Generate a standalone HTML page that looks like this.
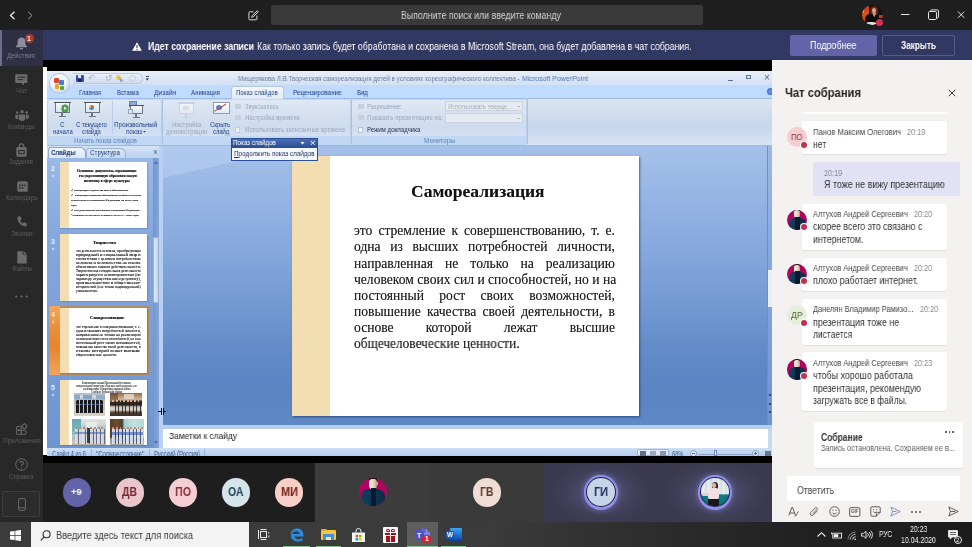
<!DOCTYPE html>
<html lang="ru">
<head>
<meta charset="utf-8">
<title>Microsoft Teams</title>
<style>
*{box-sizing:border-box;margin:0;padding:0}
html,body{width:972px;height:547px;overflow:hidden;background:#000}
body{font-family:"Liberation Sans",sans-serif;position:relative;color:#fff}
.a{position:absolute}
.t{position:absolute;white-space:nowrap;line-height:1;will-change:transform}
svg{position:absolute;overflow:visible}
/* ---------- title bar ---------- */
#titlebar{left:0;top:0;width:972px;height:30px;background:#1f1f1f}
#search{left:271px;top:5px;width:432px;height:20px;background:#3a3a3a;border-radius:2px}
/* ---------- rail ---------- */
#rail{left:0;top:30px;width:43px;height:492px;background:#282828}
#rail .act{left:0;top:0;width:43px;height:35.500px;background:#2f3046}
#rail .act:before{content:"";position:absolute;left:0;top:0;width:2px;height:36px;background:#6d6e8e}
.rl{position:absolute;left:0;width:43px;text-align:center;font-size:7.5px;color:#5c5c5c;line-height:1}
/* ---------- banner ---------- */
#banner{left:43px;top:30px;width:929px;height:30px;background:#313862}
/* ---------- stage ---------- */
#stage{left:0;top:0;width:772px;height:463px;background:#000;overflow:hidden;z-index:0}
#ppt{left:0;top:0;width:772px;height:455.500px;overflow:hidden}
#titlebar,#rail,#banner,#chat,#strip,#taskbar{z-index:2}
/* ---------- chat ---------- */
#chat{left:772px;top:60px;width:200px;height:462px;overflow:hidden;background:#f3f2f1;color:#252423}
/* ---------- strip ---------- */
#strip{left:43px;top:462.500px;width:729px;height:59.500px;background:#1e1e1e;overflow:hidden}
/* ---------- taskbar ---------- */
#taskbar{left:0;top:521.700px;width:972px;height:25.300px;background:linear-gradient(90deg,#3b3b3b 0%,#3b3b3b 50%,#2c2c2c 68%,#202020 84%,#1c1c1c 100%);overflow:hidden}
</style>
</head>
<body>
<div id="titlebar" class="a">
<svg style="left:8px;top:10px" width="32" height="11" viewBox="0 0 32 11" fill="none" stroke-linecap="square"><path d="M6 2.200 L2.500 5.500 L6 8.800" stroke="#e8e8e8" stroke-width="1.300"/><path d="M20.500 2.200 L24 5.500 L20.500 8.800" stroke="#9a9a9a" stroke-width="1"/></svg>
<svg style="left:248px;top:10px" width="11" height="11" viewBox="0 0 11 11" fill="none" stroke="#d6d6d6" stroke-width="1"><path d="M5.5 1.8H1.9a1 1 0 0 0-1 1v6a1 1 0 0 0 1 1h6a1 1 0 0 0 1-1V5.5"/><path d="M9.2 .7l1.1 1.1-5 5-1.6.5.5-1.6z"/></svg>
<div id="search" class="a"></div>
<div class="t" id="srchtxt" style="transform:scaleX(0.8547);transform-origin:0 0;left:401px;top:10.900px;font-size:10.3px;color:#d2d2d2">Выполните поиск или введите команду</div>
<div class="a" style="left:861.800px;top:4.800px;width:21.300px;height:20.600px;border-radius:50%;overflow:hidden;background:#17110f">
 <div class="a" style="left:0;top:1.500px;width:7.200px;height:16px;background:linear-gradient(#c33d1a,#e0501f 50%,#d2431b)"></div>
 <div class="a" style="left:.6px;top:5px;width:1.800px;height:3.500px;background:#d9a13a"></div>
 <div class="a" style="left:17px;top:10.200px;width:4.300px;height:3.200px;background:#c4381b"></div>
 <div class="a" style="left:8.200px;top:1.300px;width:8.200px;height:9.500px;border-radius:50%;background:#5f2c16"></div>
 <div class="a" style="left:10.600px;top:3px;width:3.800px;height:5.400px;border-radius:50%;background:#d9a78f"></div>
 <div class="a" style="left:3.500px;top:9px;width:14px;height:11px;border-radius:5px 5px 2px 2px;background:#0b0a0a"></div>
 <div class="a" style="left:10.200px;top:8px;width:4.600px;height:4.500px;background:#c7947c;clip-path:polygon(0 0,100% 0,50% 100%)"></div>
 <div class="a" style="left:4px;top:17.300px;width:10px;height:2.600px;border-radius:50%;background:#e6e1dc"></div>
</div>
<div class="a" style="left:875.800px;top:18.500px;width:7px;height:7px;border-radius:50%;background:#d5304f"></div>
<svg style="left:900px;top:9px" width="66" height="12" viewBox="0 0 66 12" fill="none" stroke="#e4e4e4" stroke-width="1"><path d="M1 5.5h8.5"/><rect x="28.5" y="2.5" width="8" height="8" rx="1.2"/><path d="M30.5 2.5v-.6a1 1 0 0 1 1-1h6a1 1 0 0 1 1 1v6a1 1 0 0 1-1 1h-.9"/><path d="M58 2.6l6.2 6.2M64.2 2.6L58 8.8"/></svg>
</div>
<div id="rail" class="a">
<div class="act a"></div>
<!-- bell -->
<svg style="left:15px;top:7px" width="13" height="13" viewBox="0 0 13 13"><path d="M6.5 .6c-2.3 0-3.9 1.7-3.9 4v2.6L1 9.4v.8h11v-.8l-1.6-2.2V4.600c0-2.300-1.600-4-3.900-4z" fill="#8d8da0"/><path d="M4.900 11h3.200a1.600 1.600 0 0 1-3.200 0z" fill="#8d8da0"/></svg>
<div class="a" style="left:24.500px;top:3.800px;width:9.500px;height:9.500px;border-radius:50%;background:#a83c2b"></div>
<div class="t" style="left:27.300px;top:5.200px;font-size:7px;font-weight:bold;color:#f0e0dc">1</div>
<div class="rl" style="top:22px;color:#7e7e92"><span class="t" id="rl0" style="transform:scaleX(0.8517);transform-origin:0 0;left:7.300px;top:0;position:absolute">Действия</span></div>
<!-- chat -->
<svg style="left:15px;top:43.500px" width="13" height="12" viewBox="0 0 13 12"><path d="M1 .3h10.600a.8.800 0 0 1 .8.800v7.200a.8.800 0 0 1-.8.800h-2.600v2.400l-2.600-2.400h-5.400a.8.800 0 0 1-.8-.8v-7.200a.8.800 0 0 1 .8-.8z" fill="#6b6b6b"/><path d="M2.800 3.200h7.400M2.800 5.600h5" stroke="#282828" stroke-width="1"/></svg>
<div class="rl" style="top:57px"><span class="t" id="rl1" style="transform:scaleX(0.8833);transform-origin:0 0;left:15.800px;top:0">Чат</span></div>
<!-- teams -->
<svg style="left:14.500px;top:80px" width="14" height="11" viewBox="0 0 14 11" fill="#6b6b6b"><circle cx="7" cy="1.800" r="1.700"/><circle cx="2.300" cy="2.600" r="1.300"/><circle cx="11.700" cy="2.600" r="1.300"/><path d="M3.800 4.400h6.400v4.200a3.200 2.400 0 0 1-6.400 0z"/><path d="M.3 4.800h2.800v4.300a2.200 1.600 0 0 1-2.800-1.300z"/><path d="M13.700 4.800h-2.800v4.300a2.200 1.600 0 0 0 2.800-1.300z"/></svg>
<div class="rl" style="top:92.500px"><span class="t" id="rl2" style="transform:scaleX(0.8338);transform-origin:0 0;left:8.100px;top:0">Команды</span></div>
<!-- assignments -->
<svg style="left:16px;top:114px" width="11" height="13" viewBox="0 0 11 13"><path d="M3.200 3.200v-1a2.300 2.300 0 0 1 4.600 0v1" fill="none" stroke="#6b6b6b" stroke-width="1.200"/><rect x=".3" y="3" width="10.400" height="9.700" rx="1.600" fill="#6b6b6b"/><rect x="2.800" y="6.500" width="5.400" height="3.200" fill="none" stroke="#282828" stroke-width="1"/></svg>
<div class="rl" style="top:128px"><span class="t" id="rl3" style="transform:scaleX(0.8093);transform-origin:0 0;left:9.200px;top:0">Задания</span></div>
<!-- calendar -->
<svg style="left:16.500px;top:150.500px" width="11" height="11" viewBox="0 0 11 11"><rect x=".2" y=".2" width="10.600" height="10.600" rx="1.600" fill="#6b6b6b"/><g fill="#282828"><rect x="2.200" y="3.600" width="1.500" height="1.500"/><rect x="4.750" y="3.600" width="1.500" height="1.500"/><rect x="7.300" y="3.600" width="1.500" height="1.500"/><rect x="2.200" y="6.200" width="1.500" height="1.500"/><rect x="4.750" y="6.200" width="1.500" height="1.500"/></g></svg>
<div class="rl" style="top:163.500px"><span class="t" id="rl4" style="transform:scaleX(0.8320);transform-origin:0 0;left:5.600px;top:0">Календарь</span></div>
<!-- calls -->
<svg style="left:17px;top:186px" width="10" height="11" viewBox="0 0 10 11"><path d="M2.600 .3c.4-.1.800.1 1 .5l.8 2c.1.400 0 .8-.3 1l-.9.700c.5 1.300 1.500 2.400 2.700 3l.8-.9c.3-.3.700-.4 1-.2l1.800 1c.4.200.5.600.4 1l-.3 1c-.2.700-.8 1.100-1.500 1-4.200-.6-7.400-4.100-7.700-8.400 0-.7.400-1.300 1.100-1.500z" fill="#6b6b6b"/></svg>
<div class="rl" style="top:199.500px"><span class="t" id="rl5" style="transform:scaleX(0.8877);transform-origin:0 0;left:10.700px;top:0">Звонки</span></div>
<!-- files -->
<svg style="left:17.300px;top:220.500px" width="10" height="13" viewBox="0 0 10 13"><path d="M1.200 .2h4.600v3.400h3.900v8a1 1 0 0 1-1 1h-7.500a1 1 0 0 1-1-1v-10.400a1 1 0 0 1 1-1z" fill="#6b6b6b"/><path d="M6.600 .3l3 2.700h-3z" fill="#6b6b6b"/></svg>
<div class="rl" style="top:235px"><span class="t" id="rl6" style="transform:scaleX(0.8388);transform-origin:0 0;left:11.500px;top:0">Файлы</span></div>
<!-- more -->
<svg style="left:15px;top:264.500px" width="13" height="3" viewBox="0 0 13 3" fill="#6b6b6b"><circle cx="1.300" cy="1.500" r="1.100"/><circle cx="6.500" cy="1.500" r="1.100"/><circle cx="11.700" cy="1.500" r="1.100"/></svg>
<!-- apps -->
<svg style="left:16px;top:393px" width="12" height="12" viewBox="0 0 12 12" fill="none" stroke="#6b6b6b" stroke-width="1"><rect x=".6" y="3.400" width="4.600" height="3.800" rx=".6"/><rect x=".6" y="7.200" width="4.600" height="4.200" rx=".6"/><rect x="5.200" y="7.200" width="4.600" height="4.200" rx=".6"/><rect x="6.400" y="1.200" width="4" height="4" rx=".6" transform="rotate(45 8.400 3.200)"/></svg>
<div class="rl" style="top:407px"><span class="t" id="rl7" style="transform:scaleX(0.8544);transform-origin:0 0;left:2.700px;top:0">Приложения</span></div>
<!-- help -->
<svg style="left:14.800px;top:428px" width="13" height="13" viewBox="0 0 13 13" fill="none" stroke="#6b6b6b" stroke-width="1"><circle cx="6.500" cy="6.500" r="5.800"/><path d="M4.700 5.100a1.800 1.800 0 1 1 2.600 1.600c-.6.300-.8.700-.8 1.300v.3" stroke-width="1.100"/><path d="M6.500 9.400v1.200" stroke-width="1.100"/></svg>
<div class="rl" style="top:442.500px"><span class="t" id="rl8" style="transform:scaleX(0.8327);transform-origin:0 0;left:9px;top:0">Справка</span></div>
<!-- device -->
<div class="a" style="left:2.300px;top:461.200px;width:38px;height:25.500px;border:1px solid #3d3d3d;border-radius:2px;background:#2c2c2c"></div>
<svg style="left:17.500px;top:468px" width="8" height="13" viewBox="0 0 8 13" fill="none" stroke="#6b6b6b" stroke-width="1"><rect x=".6" y=".6" width="6.800" height="11.800" rx="1.200"/><path d="M.6 9.800h6.800"/></svg>
</div>
<div id="banner" class="a">
<svg style="left:89px;top:11.5px" width="10" height="9" viewBox="0 0 10 9"><path d="M5 .2L9.9 8.8H.1z" fill="#fff"/><path d="M5 3v3.2M5 7v1" stroke="#313862" stroke-width="1.1"/></svg>
<div class="t" id="bn1" style="transform:scaleX(0.8220);transform-origin:0 0;left:104.5px;top:10.5px;font-size:10.6px;font-weight:bold;color:#fff">Идет сохранение записи</div>
<div class="t" id="bn2" style="transform:scaleX(0.8283);transform-origin:0 0;left:214px;top:10.5px;font-size:10.6px;color:#fff">Как только запись будет обработана и сохранена в Microsoft Stream, она будет добавлена в чат собрания.</div>
<div class="a" style="left:747px;top:5px;width:87px;height:21px;border-radius:2px;background:#6264a7"></div>
<div class="t" id="bb1" style="transform:scaleX(0.8629);transform-origin:0 0;left:767px;top:11.300px;font-size:10.4px;color:#fff">Подробнее</div>
<div class="a" style="left:839px;top:5px;width:73px;height:21px;border-radius:2px;border:1px solid #585b82"></div>
<div class="t" id="bb2" style="transform:scaleX(0.7921);transform-origin:0 0;left:857.500px;top:11.300px;font-size:10.4px;font-weight:bold;color:#fff">Закрыть</div>
</div>
<div id="stage" class="a">
<div class="a" style="left:43px;top:67px;width:4.2px;height:388.4px;background:#fff;"></div>
<div id="ppt" class="a">
<div class="a" style="left:47px;top:71px;width:725px;height:14px;background:linear-gradient(#e6eef9,#d3e1f3);"></div>
<div class="a" style="left:47px;top:85px;width:725px;height:13px;background:#bfdbff;"></div>
<div class="a" style="left:47px;top:97.5px;width:725px;height:48.5px;background:linear-gradient(#dbe6f4 0%,#d0dcee 35%,#c7d6ec 60%,#d7e4f5 100%);border-top:1px solid #9dbbe3;border-bottom:1px solid #9dbbe3"></div>
<div class="a" style="left:48px;top:100px;width:113px;height:44.5px;background:rgba(255,255,255,.13);border-radius:2px;box-shadow:0 0 0 .6px rgba(150,175,215,.55)"></div>
<div class="a" style="left:163px;top:100px;width:187px;height:44.5px;background:rgba(255,255,255,.13);border-radius:2px;box-shadow:0 0 0 .6px rgba(150,175,215,.55)"></div>
<div class="a" style="left:352px;top:100px;width:174.2px;height:44.5px;background:rgba(255,255,255,.13);border-radius:2px;box-shadow:0 0 0 .6px rgba(150,175,215,.55)"></div>
<div class="a" style="left:48px;top:136px;width:113px;height:9px;background:#c1d8f4;border-radius:0 0 2px 2px"></div>
<div class="a" style="left:163px;top:136px;width:187px;height:9px;background:#c1d8f4;border-radius:0 0 2px 2px"></div>
<div class="a" style="left:352px;top:136px;width:174px;height:9px;background:#c1d8f4;border-radius:0 0 2px 2px"></div>
<div class="a" style="left:161.5px;top:99px;width:1px;height:45px;background:#a9c3e6;"></div>
<div class="a" style="left:350.5px;top:99px;width:1px;height:45px;background:#a9c3e6;"></div>
<div class="a" style="left:526.5px;top:99px;width:1px;height:45px;background:#a9c3e6;"></div>
<div class="a" style="left:111.7px;top:101px;width:1px;height:33px;background:#b9cde8;"></div>
<div class="a" style="left:49.5px;top:73.500px;width:19.500px;height:19.500px;border-radius:50%;background:radial-gradient(circle at 45% 35%,#ffffff 0%,#f3f5fa 45%,#c9d3e6 80%,#9fb0cf 100%);box-shadow:0 0 0 1px #b7c4dc"></div>
<div class="a" style="left:54px;top:78px;width:4.5px;height:5px;background:#e0452a;border-radius:1px"></div>
<div class="a" style="left:59px;top:79.5px;width:4.5px;height:5px;background:#3f7fd0;border-radius:1px"></div>
<div class="a" style="left:54.5px;top:84px;width:4.5px;height:5px;background:#f0a020;border-radius:1px"></div>
<div class="a" style="left:59.5px;top:85.5px;width:4.5px;height:4px;background:#5aa33a;border-radius:1px"></div>
<div class="a" style="left:72.500px;top:73px;width:70px;height:10.500px;border-radius:0 6px 6px 0;background:linear-gradient(#e9f0fa,#cfdcef);border:1px solid #b9c9e2;border-left:none"></div>
<div class="a" style="left:76px;top:74.5px;width:7.5px;height:7.5px;background:#3b4fa0;border-radius:1px"></div>
<div class="a" style="left:77.8px;top:74.5px;width:3.6px;height:3px;background:#dfe6f5;"></div>
<div class="a" style="left:78px;top:79.2px;width:3.5px;height:2.8px;background:#1e2b66;"></div>
<div class="t" style="left:88px;top:73.5px;font-size:9px;color:#a9b4cc;">↶</div>
<div class="t" style="left:104.5px;top:73.5px;font-size:9px;color:#a3aec6;">↺</div>
<div class="a" style="left:116px;top:74.5px;width:5px;height:5px;background:#e8c84a;border-radius:50%"></div>
<div class="a" style="left:118.5px;top:77px;width:5px;height:5.5px;background:#8fa2c8;clip-path:polygon(0 0,100% 60%,40% 100%)"></div>
<div class="a" style="left:129px;top:75px;width:6.5px;height:6.5px;background:transparent;border-radius:50%;border:1px solid #c3cde0"></div>
<div class="a" style="left:145.5px;top:76px;width:3.5px;height:1px;background:#3a4a6a;"></div>
<div class="a" style="left:145.5px;top:78.2px;width:3.5px;height:2.5px;background:#3a4a6a;clip-path:polygon(0 0,100% 0,50% 100%)"></div>
<div class="t" style="transform:scaleX(0.7980);transform-origin:0 0;left:237.5px;top:74.5px;font-size:7.8px;color:#6d7d97;">Мищерякова Л.В.Творческая самореализация детей в условиях хореографического коллектива -</div>
<div class="t" style="transform:scaleX(0.8959);transform-origin:0 0;left:522px;top:74.5px;font-size:7.8px;color:#4f74b3;">Microsoft PowerPoint</div>
<div class="a" style="left:728px;top:79.5px;width:4.5px;height:1.3px;background:#5f7190;"></div>
<div class="a" style="left:745.500px;top:74.500px;width:5.500px;height:4.500px;border:1px solid #61728f;border-top-width:1.500px"></div>
<div class="t" style="left:764px;top:72.5px;font-size:10px;color:#55667f;">×</div>
<div class="t" style="transform:scaleX(0.7478);transform-origin:0 0;left:79.3px;top:89px;font-size:7.8px;color:#22428a;">Главная</div>
<div class="t" style="transform:scaleX(0.7487);transform-origin:0 0;left:116.5px;top:89px;font-size:7.8px;color:#22428a;">Вставка</div>
<div class="t" style="transform:scaleX(0.8467);transform-origin:0 0;left:153.7px;top:89px;font-size:7.8px;color:#22428a;">Дизайн</div>
<div class="t" style="transform:scaleX(0.7921);transform-origin:0 0;left:191px;top:89px;font-size:7.8px;color:#22428a;">Анимация</div>
<div class="a" style="left:230.500px;top:86px;width:53px;height:12.500px;background:linear-gradient(#f4f8fd,#dfe9f6);border:1px solid #b3c9e8;border-bottom:none;border-radius:3px 3px 0 0"></div>
<div class="t" style="transform:scaleX(0.7786);transform-origin:0 0;left:236px;top:89px;font-size:7.8px;color:#22428a;">Показ слайдов</div>
<div class="t" style="transform:scaleX(0.8087);transform-origin:0 0;left:292.8px;top:89px;font-size:7.8px;color:#22428a;">Рецензирование</div>
<div class="t" style="transform:scaleX(0.7584);transform-origin:0 0;left:356.7px;top:89px;font-size:7.8px;color:#22428a;">Вид</div>
<div class="a" style="left:766.5px;top:87.5px;width:7px;height:7px;background:radial-gradient(#6f9be8,#2b5fc4);border-radius:50%"></div>
<div class="a" style="left:53.5px;top:101.5px;width:17px;height:1.8px;background:#4d525c;"></div>
<div class="a" style="left:54.5px;top:103.0px;width:15px;height:10px;background:linear-gradient(#f6f9fd,#d9e3f1);border:1px solid #6e7684;border-top:none"></div>
<div class="a" style="left:61.4px;top:113.0px;width:1.2px;height:3.5px;background:#6e7684;"></div>
<div class="a" style="left:58.5px;top:116.0px;width:7px;height:1.2px;background:#6e7684;"></div>
<div class="a" style="left:61.5px;top:105px;width:6.5px;height:6.5px;background:#4aa84a;border-radius:50%;box-shadow:0 0 0 .5px #2f7a33"></div>
<div class="a" style="left:63.6px;top:106.5px;width:3.2px;height:3.6px;background:#fff;clip-path:polygon(0 0,100% 50%,0 100%)"></div>
<div class="a" style="left:83.5px;top:101.5px;width:17px;height:1.8px;background:#4d525c;"></div>
<div class="a" style="left:84.5px;top:103.0px;width:15px;height:10px;background:linear-gradient(#f6f9fd,#d9e3f1);border:1px solid #6e7684;border-top:none"></div>
<div class="a" style="left:91.4px;top:113.0px;width:1.2px;height:3.5px;background:#6e7684;"></div>
<div class="a" style="left:88.5px;top:116.0px;width:7px;height:1.2px;background:#6e7684;"></div>
<div class="a" style="left:88.5px;top:104.5px;width:5px;height:5px;background:conic-gradient(#e0562f 0 35%,#4a86d8 35% 75%,#f0b030 75%);border-radius:50%"></div>
<div class="a" style="left:128.5px;top:100.5px;width:8px;height:6px;background:#8ea7d6;border:1px solid #6c86b8"></div>
<div class="a" style="left:128.5px;top:104.5px;width:15px;height:1.8px;background:#4d525c;"></div>
<div class="a" style="left:129.5px;top:106.0px;width:13px;height:8px;background:linear-gradient(#f6f9fd,#d9e3f1);border:1px solid #6e7684;border-top:none"></div>
<div class="a" style="left:135.4px;top:114.0px;width:1.2px;height:3.5px;background:#6e7684;"></div>
<div class="a" style="left:132.5px;top:117.0px;width:7px;height:1.2px;background:#6e7684;"></div>
<div class="a" style="left:127.5px;top:108.5px;width:5.5px;height:5px;background:#dfe7f3;border:1px solid #94a4bf"></div>
<div class="t" style="transform:scaleX(0.7978);transform-origin:0 0;left:59.5px;top:120.5px;font-size:7.8px;color:#22428a;">С</div>
<div class="t" style="transform:scaleX(0.7685);transform-origin:0 0;left:52.8px;top:127.8px;font-size:7.8px;color:#22428a;">начала</div>
<div class="t" style="transform:scaleX(0.7619);transform-origin:0 0;left:76px;top:120.5px;font-size:7.8px;color:#22428a;">С текущего</div>
<div class="t" style="transform:scaleX(0.7107);transform-origin:0 0;left:81.5px;top:127.8px;font-size:7.8px;color:#22428a;">слайда</div>
<div class="t" style="transform:scaleX(0.8103);transform-origin:0 0;left:114px;top:120.5px;font-size:7.8px;color:#22428a;">Произвольный</div>
<div class="t" style="transform:scaleX(0.8013);transform-origin:0 0;left:125.6px;top:127.8px;font-size:7.8px;color:#22428a;">показ</div>
<div class="a" style="left:143px;top:131px;width:3px;height:1.8px;background:#3a5488;clip-path:polygon(0 0,100% 0,50% 100%)"></div>
<div class="t" style="transform:scaleX(0.8021);transform-origin:0 0;left:74.2px;top:136.7px;font-size:7.6px;color:#5f7fb6;">Начать показ слайдов</div>
<div class="a" style="left:177.5px;top:102px;width:17px;height:1.8px;background:#c9d2df;"></div>
<div class="a" style="left:178.5px;top:103.5px;width:15px;height:10px;background:linear-gradient(#f2f5fa,#e3e9f2);border:1px solid #c9d2df;border-top:none"></div>
<div class="a" style="left:185.4px;top:113.5px;width:1.2px;height:3.5px;background:#c9d2df;"></div>
<div class="a" style="left:182.5px;top:116.5px;width:7px;height:1.2px;background:#c9d2df;"></div>
<div class="a" style="left:183px;top:105.5px;width:6px;height:4px;background:#d5dcea;border-radius:1px"></div>
<div class="t" style="transform:scaleX(0.7658);transform-origin:0 0;left:171.6px;top:120.5px;font-size:7.8px;color:#9ba8be;">Настройка</div>
<div class="t" style="transform:scaleX(0.7947);transform-origin:0 0;left:165.7px;top:127.8px;font-size:7.8px;color:#9ba8be;">демонстрации</div>
<div class="a" style="left:212.500px;top:102px;width:17px;height:12px;background:linear-gradient(#ffffff,#e6ecf6);border:1px solid #8f9bb0"></div>
<div class="a" style="left:216px;top:105px;width:6px;height:5px;background:#5b7ed0;border-radius:50%"></div>
<div class="a" style="left:214px;top:111.3px;width:14px;height:1.2px;background:#c04a3a;transform:rotate(-32deg);transform-origin:0 0"></div>
<div class="t" style="transform:scaleX(0.7549);transform-origin:0 0;left:210.4px;top:120.5px;font-size:7.8px;color:#22428a;">Скрыть</div>
<div class="t" style="transform:scaleX(0.7418);transform-origin:0 0;left:212.5px;top:127.8px;font-size:7.8px;color:#22428a;">слайд</div>
<div class="a" style="left:235px;top:103.5px;width:6px;height:5px;background:#c5cfe0;border-radius:1px"></div>
<div class="a" style="left:235px;top:115px;width:6px;height:5px;background:#c5cfe0;border-radius:1px"></div>
<div class="a" style="left:235px;top:127.300px;width:5.300px;height:5.300px;background:#eef2f8;border:.8px solid #c0cadc"></div>
<div class="t" style="transform:scaleX(0.7796);transform-origin:0 0;left:244.7px;top:102.8px;font-size:7.6px;color:#9ba8be;">Звукозапись</div>
<div class="t" style="transform:scaleX(0.7873);transform-origin:0 0;left:244.7px;top:114.3px;font-size:7.6px;color:#9ba8be;">Настройка времени</div>
<div class="t" style="transform:scaleX(0.7962);transform-origin:0 0;left:244.7px;top:125.6px;font-size:7.6px;color:#9ba8be;">Использовать записанные времена</div>
<div class="a" style="left:358px;top:103.5px;width:6px;height:5px;background:#c5cfe0;border-radius:1px"></div>
<div class="a" style="left:358px;top:115px;width:6px;height:5px;background:#c5cfe0;border-radius:1px"></div>
<div class="a" style="left:357.500px;top:127.300px;width:5.300px;height:5.300px;background:#f4f7fb;border:.8px solid #b5c2d8"></div>
<div class="t" style="transform:scaleX(0.7570);transform-origin:0 0;left:366.9px;top:102.8px;font-size:7.6px;color:#9ba8be;">Разрешение:</div>
<div class="t" style="transform:scaleX(0.8160);transform-origin:0 0;left:366.9px;top:114.3px;font-size:7.6px;color:#9ba8be;">Показать презентацию на:</div>
<div class="t" style="transform:scaleX(0.8034);transform-origin:0 0;left:366.9px;top:125.6px;font-size:7.6px;color:#1f2f4f;">Режим докладчика</div>
<div class="a" style="left:445px;top:100.800px;width:77.700px;height:10.700px;background:#e7ebf1;border:1px solid #c9d2e0"></div>
<div class="a" style="left:445px;top:112.500px;width:77.700px;height:10.300px;background:#e7ebf1;border:1px solid #c9d2e0"></div>
<div class="t" style="transform:scaleX(0.7971);transform-origin:0 0;left:447.7px;top:103px;font-size:7.4px;color:#a5afc0;">Использовать текуще…</div>
<div class="a" style="left:516.5px;top:105.5px;width:3px;height:1.2px;background:#b5bfd0;"></div>
<div class="a" style="left:516.5px;top:117.5px;width:3px;height:1.2px;background:#b5bfd0;"></div>
<div class="t" style="transform:scaleX(0.8522);transform-origin:0 0;left:423.6px;top:136.7px;font-size:7.6px;color:#5f7fb6;">Мониторы</div>
<div class="a" style="left:47px;top:146px;width:725px;height:310px;background:linear-gradient(#a5c0ea 0%,#93b2e3 20%,#7a9fd6 45%,#608ac6 68%,#5a84c2 80%,#648dc9 100%);"></div>
<div class="a" style="left:163px;top:146px;width:140px;height:32px;background:rgba(200,220,250,.35);clip-path:polygon(0 0,100% 0,0 100%)"></div>
<div class="a" style="left:47px;top:146px;width:113px;height:303px;background:linear-gradient(#9dbbe8 0%,#84a7dd 30%,#6d95d0 100%);"></div>
<div class="a" style="left:47px;top:146px;width:113px;height:11.5px;background:linear-gradient(#d5e3f6,#bcd2f0);"></div>
<div class="a" style="left:48px;top:147px;width:38px;height:11px;background:linear-gradient(#f3f7fd,#d9e6f7);border:1px solid #8aa8d6;border-bottom:none;border-radius:3px 6px 0 0"></div>
<div class="a" style="left:86px;top:148px;width:40px;height:9.500px;background:linear-gradient(#dfe9f8,#c4d6f0);border:1px solid #9ab4dc;border-bottom:none;border-radius:3px 6px 0 0"></div>
<div class="t" style="transform:scaleX(0.7654);transform-origin:0 0;left:51.1px;top:149px;font-size:8px;color:#15305f;font-weight:bold;">Слайды</div>
<div class="t" style="transform:scaleX(0.7931);transform-origin:0 0;left:90.3px;top:149px;font-size:8px;color:#1f3f7a;">Структура</div>
<div class="t" style="left:152.5px;top:148.2px;font-size:8.5px;color:#4a6394;">×</div>
<div class="a" style="left:152.6px;top:158px;width:6.8px;height:291px;background:linear-gradient(90deg,#7596cc,#86a5d8);"></div>
<div class="a" style="left:154px;top:161px;width:4px;height:3px;background:#4f6fa8;clip-path:polygon(50% 0,100% 100%,0 100%)"></div>
<div class="a" style="left:154px;top:441px;width:4px;height:3px;background:#4f6fa8;clip-path:polygon(0 0,100% 0,50% 100%)"></div>
<div class="a" style="left:152.8px;top:236.5px;width:6.4px;height:66px;background:linear-gradient(90deg,#dfe8f6,#c3d3ec);border-radius:1px;border:.5px solid #9ab0d4"></div>
<div class="a" style="left:159.4px;top:146px;width:3.4px;height:303px;background:#b9d0f2;"></div>
<div class="a" style="left:59.7px;top:162px;width:87.6px;height:65.7px;background:#fff;box-shadow:.8px .8px 1.500px rgba(30,50,90,.55)"></div>
<div class="a" style="left:59.7px;top:162px;width:9.5px;height:65.7px;background:#f3deb4;"></div>
<div class="t" style="left:51px;top:165.1px;font-size:7px;color:#e8f0fc;font-weight:bold;">2</div>
<div class="a" style="left:51.5px;top:174px;width:3px;height:3.5px;background:#d9e6fa;clip-path:polygon(50% 0,62% 36%,100% 38%,70% 60%,80% 100%,50% 76%,20% 100%,30% 60%,0 38%,38% 36%)"></div>
<div class="a" style="left:59.7px;top:234.4px;width:87.6px;height:66.2px;background:#fff;box-shadow:.8px .8px 1.500px rgba(30,50,90,.55)"></div>
<div class="a" style="left:59.7px;top:234.4px;width:9.5px;height:66.2px;background:#f3deb4;"></div>
<div class="t" style="left:51px;top:238.1px;font-size:7px;color:#e8f0fc;font-weight:bold;">3</div>
<div class="a" style="left:51.5px;top:247px;width:3px;height:3.5px;background:#d9e6fa;clip-path:polygon(50% 0,62% 36%,100% 38%,70% 60%,80% 100%,50% 76%,20% 100%,30% 60%,0 38%,38% 36%)"></div>
<div class="a" style="left:49.4px;top:305.7px;width:99.8px;height:69.0px;background:#b78b5e;border-radius:1.500px"></div>
<div class="a" style="left:49.4px;top:305.7px;width:10.4px;height:69.0px;background:linear-gradient(#f3a85a 0%,#ec9038 30%,#e8842c 60%,#efa55c 100%);border-radius:1.500px 0 0 1.500px"></div>
<div class="a" style="left:59.7px;top:308.3px;width:87.6px;height:64.6px;background:#fff;box-shadow:.8px .8px 1.500px rgba(30,50,90,.55)"></div>
<div class="a" style="left:59.7px;top:308.3px;width:9.5px;height:64.6px;background:#f3deb4;"></div>
<div class="t" style="left:51px;top:311.1px;font-size:7px;color:#fff5e6;font-weight:bold;">4</div>
<div class="a" style="left:51.5px;top:320px;width:3px;height:3.5px;background:#ffe9cc;clip-path:polygon(50% 0,62% 36%,100% 38%,70% 60%,80% 100%,50% 76%,20% 100%,30% 60%,0 38%,38% 36%)"></div>
<div class="a" style="left:59.7px;top:380.4px;width:87.6px;height:65px;background:#fff;box-shadow:.8px .8px 1.500px rgba(30,50,90,.55)"></div>
<div class="a" style="left:59.7px;top:380.4px;width:9.5px;height:65px;background:#f3deb4;"></div>
<div class="t" style="left:51px;top:384.1px;font-size:7px;color:#e8f0fc;font-weight:bold;">5</div>
<div class="a" style="left:51.5px;top:393px;width:3px;height:3.5px;background:#d9e6fa;clip-path:polygon(50% 0,62% 36%,100% 38%,70% 60%,80% 100%,50% 76%,20% 100%,30% 60%,0 38%,38% 36%)"></div>
<div class="t" style="transform:scaleX(0.9402);transform-origin:0 0;left:77.4px;top:169.972px;font-size:3.9px;color:#000;font-weight:bold;font-family:'Liberation Serif',serif;text-shadow:0 0 .3px rgba(0,0,0,.55);">Основные документы, отражающие</div>
<div class="t" style="transform:scaleX(0.9125);transform-origin:0 0;left:78.6px;top:174.772px;font-size:3.9px;color:#000;font-weight:bold;font-family:'Liberation Serif',serif;text-shadow:0 0 .3px rgba(0,0,0,.55);">гос.укрепляющую образовательную</div>
<div class="t" style="transform:scaleX(0.9309);transform-origin:0 0;left:84.4px;top:179.672px;font-size:3.9px;color:#000;font-weight:bold;font-family:'Liberation Serif',serif;text-shadow:0 0 .3px rgba(0,0,0,.55);">политику в сфере культуры</div>
<div class="t" style="transform:scaleX(0.9964);transform-origin:0 0;left:70.7px;top:189.492px;font-size:2.9px;color:#000;font-weight:bold;font-family:'Liberation Serif',serif;text-shadow:0 0 .3px rgba(0,0,0,.55);">✓Концепция художественного образования</div>
<div class="t" style="transform:scaleX(0.9739);transform-origin:0 0;left:70.7px;top:194.452px;font-size:2.9px;color:#000;font-weight:bold;font-family:'Liberation Serif',serif;text-shadow:0 0 .3px rgba(0,0,0,.55);">✓ Концепция развития образования в сфере культуры</div>
<div class="t" style="transform:scaleX(1.0137);transform-origin:0 0;left:70.7px;top:199.41199999999998px;font-size:2.9px;color:#000;font-weight:bold;font-family:'Liberation Serif',serif;text-shadow:0 0 .3px rgba(0,0,0,.55);">и искусства в Российской Федерации на 2018−2020</div>
<div class="t" style="transform:scaleX(0.9165);transform-origin:0 0;left:70.7px;top:204.37199999999999px;font-size:2.9px;color:#000;font-weight:bold;font-family:'Liberation Serif',serif;text-shadow:0 0 .3px rgba(0,0,0,.55);">годы</div>
<div class="t" style="transform:scaleX(0.9657);transform-origin:0 0;left:70.7px;top:209.332px;font-size:2.9px;color:#000;font-weight:bold;font-family:'Liberation Serif',serif;text-shadow:0 0 .3px rgba(0,0,0,.55);">✓Государственная программа Российской Федерации</div>
<div class="t" style="transform:scaleX(0.9927);transform-origin:0 0;left:70.7px;top:214.292px;font-size:2.9px;color:#000;font-weight:bold;font-family:'Liberation Serif',serif;text-shadow:0 0 .3px rgba(0,0,0,.55);">“Развитие культуры и туризма” на 2013 − 2020 годы</div>
<div class="t" style="transform:scaleX(0.9189);transform-origin:0 0;left:93.2px;top:241.40399999999997px;font-size:4.8px;color:#000;font-weight:bold;font-family:'Liberation Serif',serif;text-shadow:0 0 .3px rgba(0,0,0,.55);">Творчество</div>
<div class="t" style="transform:scaleX(1.0593);transform-origin:0 0;left:75.7px;top:250.08399999999997px;font-size:3.3px;color:#000;font-family:'Liberation Serif',serif;text-shadow:0 0 .3px rgba(0,0,0,.55);">это деятельность человека, преобразующая</div>
<div class="t" style="transform:scaleX(1.4371);transform-origin:0 0;left:75.7px;top:254.12399999999997px;font-size:3.3px;color:#000;font-family:'Liberation Serif',serif;text-shadow:0 0 .3px rgba(0,0,0,.55);">природный и социальный мир в</div>
<div class="t" style="transform:scaleX(1.1380);transform-origin:0 0;left:75.7px;top:258.164px;font-size:3.3px;color:#000;font-family:'Liberation Serif',serif;text-shadow:0 0 .3px rgba(0,0,0,.55);">соответствии с целями и потребностями</div>
<div class="t" style="transform:scaleX(1.3251);transform-origin:0 0;left:75.7px;top:262.20399999999995px;font-size:3.3px;color:#000;font-family:'Liberation Serif',serif;text-shadow:0 0 .3px rgba(0,0,0,.55);">человека и человечества на основе</div>
<div class="t" style="transform:scaleX(1.1333);transform-origin:0 0;left:75.7px;top:266.24399999999997px;font-size:3.3px;color:#000;font-family:'Liberation Serif',serif;text-shadow:0 0 .3px rgba(0,0,0,.55);">объективных законов действительности.</div>
<div class="t" style="transform:scaleX(1.0483);transform-origin:0 0;left:75.7px;top:270.284px;font-size:3.3px;color:#000;font-family:'Liberation Serif',serif;text-shadow:0 0 .3px rgba(0,0,0,.55);">Творчество как созидательная деятельность</div>
<div class="t" style="transform:scaleX(1.1908);transform-origin:0 0;left:75.7px;top:274.32399999999996px;font-size:3.3px;color:#000;font-family:'Liberation Serif',serif;text-shadow:0 0 .3px rgba(0,0,0,.55);">характеризуется неповторимостью (по</div>
<div class="t" style="transform:scaleX(1.1469);transform-origin:0 0;left:75.7px;top:278.364px;font-size:3.3px;color:#000;font-family:'Liberation Serif',serif;text-shadow:0 0 .3px rgba(0,0,0,.55);">характеру осуществления и результату),</div>
<div class="t" style="transform:scaleX(1.3471);transform-origin:0 0;left:75.7px;top:282.404px;font-size:3.3px;color:#000;font-family:'Liberation Serif',serif;text-shadow:0 0 .3px rgba(0,0,0,.55);">оригинальностью и общественно-</div>
<div class="t" style="transform:scaleX(1.0417);transform-origin:0 0;left:75.7px;top:286.44399999999996px;font-size:3.3px;color:#000;font-family:'Liberation Serif',serif;text-shadow:0 0 .3px rgba(0,0,0,.55);">исторической (а не только индивидуальной)</div>
<div class="t" style="transform:scaleX(0.9662);transform-origin:0 0;left:75.7px;top:290.484px;font-size:3.3px;color:#000;font-family:'Liberation Serif',serif;text-shadow:0 0 .3px rgba(0,0,0,.55);">уникальностью.</div>
<div class="t" style="transform:scaleX(0.9260);transform-origin:0 0;left:90.3px;top:315.704px;font-size:4.8px;color:#000;font-weight:bold;font-family:'Liberation Serif',serif;text-shadow:0 0 .3px rgba(0,0,0,.55);">Самореализация</div>
<div class="t" style="transform:scaleX(1.0741);transform-origin:0 0;left:75.7px;top:325.88399999999996px;font-size:3.3px;color:#000;font-family:'Liberation Serif',serif;text-shadow:0 0 .3px rgba(0,0,0,.55);">это стремление к совершенствованию, т. е.</div>
<div class="t" style="transform:scaleX(1.1265);transform-origin:0 0;left:75.7px;top:329.87399999999997px;font-size:3.3px;color:#000;font-family:'Liberation Serif',serif;text-shadow:0 0 .3px rgba(0,0,0,.55);">одна из высших потребностей личности,</div>
<div class="t" style="transform:scaleX(1.1745);transform-origin:0 0;left:75.7px;top:333.864px;font-size:3.3px;color:#000;font-family:'Liberation Serif',serif;text-shadow:0 0 .3px rgba(0,0,0,.55);">направленная не только на реализацию</div>
<div class="t" style="transform:scaleX(1.0158);transform-origin:0 0;left:75.7px;top:337.854px;font-size:3.3px;color:#000;font-family:'Liberation Serif',serif;text-shadow:0 0 .3px rgba(0,0,0,.55);">человеком своих сил и способностей, но и на</div>
<div class="t" style="transform:scaleX(1.1829);transform-origin:0 0;left:75.7px;top:341.84399999999994px;font-size:3.3px;color:#000;font-family:'Liberation Serif',serif;text-shadow:0 0 .3px rgba(0,0,0,.55);">постоянный рост своих возможностей,</div>
<div class="t" style="transform:scaleX(1.0656);transform-origin:0 0;left:75.7px;top:345.83399999999995px;font-size:3.3px;color:#000;font-family:'Liberation Serif',serif;text-shadow:0 0 .3px rgba(0,0,0,.55);">повышение качества своей деятельности, в</div>
<div class="t" style="transform:scaleX(1.5222);transform-origin:0 0;left:75.7px;top:349.82399999999996px;font-size:3.3px;color:#000;font-family:'Liberation Serif',serif;text-shadow:0 0 .3px rgba(0,0,0,.55);">основе которой лежат высшие</div>
<div class="t" style="transform:scaleX(1.0002);transform-origin:0 0;left:75.7px;top:353.81399999999996px;font-size:3.3px;color:#000;font-family:'Liberation Serif',serif;text-shadow:0 0 .3px rgba(0,0,0,.55);">общечеловеческие ценности.</div>
<div class="t" style="transform:scaleX(0.7994);transform-origin:0 0;left:82.4px;top:381.7px;font-size:3px;color:#333;font-weight:bold;font-family:'Liberation Serif',serif;">Благотворительный Пасхальный фестиваль</div>
<div class="t" style="transform:scaleX(0.7275);transform-origin:0 0;left:76.3px;top:384.75px;font-size:3px;color:#333;font-weight:bold;font-family:'Liberation Serif',serif;">самодеятельного творчества «Поделись своею радостью» для</div>
<div class="t" style="transform:scaleX(0.6938);transform-origin:0 0;left:83px;top:387.8px;font-size:3px;color:#333;font-weight:bold;font-family:'Liberation Serif',serif;">детей-инвалидов «Юнармейцы, выражаем заботу»</div>
<div class="t" style="transform:scaleX(0.8581);transform-origin:0 0;left:91px;top:390.84999999999997px;font-size:3px;color:#333;font-weight:bold;font-family:'Liberation Serif',serif;">Слободо-Туринский район</div>
<div class="a" style="left:73.6px;top:393.3px;width:31px;height:22.6px;background:linear-gradient(#aebdcc 0%,#c3ccd3 22%,#b9b6ad 30%,#cfc9bb 78%,#d9d3c4 100%);"></div>
<div class="a" style="left:73.6px;top:394.5px;width:31px;height:4px;background:linear-gradient(90deg,#7f9fc4 0 18%,#d7dde2 18% 30%,#6f95c0 30% 58%,#d9dde0 58% 70%,#86a5c6 70% 100%);opacity:.75"></div>
<div class="a" style="left:75.5px;top:399.5px;width:27.5px;height:13.5px;background:repeating-linear-gradient(90deg,#15161a 0,#1d1e22 3px,rgba(200,195,180,.9) 3px,rgba(200,195,180,.9) 4px);border-radius:1.500px 1.500px 0 0"></div>
<div class="a" style="left:75.5px;top:398.2px;width:27.5px;height:2.2px;background:repeating-linear-gradient(90deg,rgba(0,0,0,0) 0,rgba(0,0,0,0) .6px,#c9a48c .6px,#c9a48c 2.400px,rgba(0,0,0,0) 2.400px,rgba(0,0,0,0) 4px);"></div>
<div class="a" style="left:75.5px;top:404px;width:27.5px;height:1.2px;background:rgba(120,150,200,.55);"></div>
<div class="a" style="left:110px;top:392.9px;width:31.8px;height:23px;background:linear-gradient(#8a6a48 0%,#b89c78 16%,#c9b596 28%,#3a2c22 36%,#2a211c 52%,#c9c4bd 60%,#d9d6d0 74%,#5a4636 84%,#3b2d22 100%);"></div>
<div class="a" style="left:110px;top:392.9px;width:8px;height:9px;background:linear-gradient(#6b4a2e,#8a6a48);opacity:.8"></div>
<div class="a" style="left:124px;top:394px;width:10px;height:4.5px;background:#e9e2d2;opacity:.75"></div>
<div class="a" style="left:112px;top:401px;width:28.5px;height:13px;background:repeating-linear-gradient(90deg,rgba(0,0,0,0) 0,rgba(0,0,0,0) 2.600px,rgba(40,30,24,.85) 2.600px,rgba(40,30,24,.85) 3.600px);"></div>
<div class="a" style="left:112px;top:399.6px;width:28.5px;height:2.2px;background:repeating-linear-gradient(90deg,rgba(0,0,0,0) 0,rgba(0,0,0,0) .5px,#d3ad94 .5px,#d3ad94 2.200px,rgba(0,0,0,0) 2.200px,rgba(0,0,0,0) 3.600px);"></div>
<div class="a" style="left:72.2px;top:419.2px;width:33.8px;height:25.8px;background:linear-gradient(#dfe3e2 0%,#d3d9d8 18%,#b9c3c6 34%,#c4c9cf 52%,#b3b8c1 74%,#c9c5bc 90%,#b5ad9f 100%);"></div>
<div class="a" style="left:72.2px;top:419.2px;width:9px;height:16px;background:linear-gradient(#4f9fa6,#7fc0c2);opacity:.85"></div>
<div class="a" style="left:86px;top:422px;width:11px;height:6px;background:#eef1ee;opacity:.8"></div>
<div class="a" style="left:74.5px;top:428.5px;width:30px;height:15px;background:repeating-linear-gradient(90deg,rgba(222,226,232,.95) 0,rgba(205,210,220,.95) 2.800px,rgba(70,80,100,.75) 2.800px,rgba(70,80,100,.75) 3.700px);"></div>
<div class="a" style="left:74.5px;top:427px;width:30px;height:2.2px;background:repeating-linear-gradient(90deg,rgba(0,0,0,0) 0,rgba(0,0,0,0) .5px,#b98f7c .5px,#b98f7c 2.300px,rgba(0,0,0,0) 2.300px,rgba(0,0,0,0) 3.700px);"></div>
<div class="a" style="left:74.5px;top:432px;width:30px;height:1.8px;background:rgba(60,90,170,.5);"></div>
<div class="a" style="left:86.5px;top:427.5px;width:3.2px;height:15px;background:#22242c;opacity:.85"></div>
<div class="a" style="left:110px;top:419.2px;width:33.8px;height:25.8px;background:linear-gradient(90deg,#5a3c22 0%,#6e4d2e 22%,#4a3a30 36%,#9fcfd0 42%,#c3e1e0 70%,#b5d9d8 100%);"></div>
<div class="a" style="left:110px;top:438px;width:33.8px;height:7px;background:linear-gradient(#9b9aa0,#bdb9b2);opacity:.85"></div>
<div class="a" style="left:112px;top:428.5px;width:30.5px;height:15px;background:repeating-linear-gradient(90deg,rgba(225,230,238,.95) 0,rgba(205,214,228,.95) 2.700px,rgba(50,60,90,.75) 2.700px,rgba(50,60,90,.75) 3.600px);"></div>
<div class="a" style="left:112px;top:427px;width:30.5px;height:2.2px;background:repeating-linear-gradient(90deg,rgba(0,0,0,0) 0,rgba(0,0,0,0) .5px,#b98f7c .5px,#b98f7c 2.200px,rgba(0,0,0,0) 2.200px,rgba(0,0,0,0) 3.600px);"></div>
<div class="a" style="left:112px;top:431.5px;width:30.5px;height:3px;background:rgba(50,80,180,.55);"></div>
<div class="a" style="left:292px;top:156px;width:347px;height:260px;background:#fff;box-shadow:1px 1px 2px rgba(20,40,90,.6)"></div>
<div class="a" style="left:292px;top:156px;width:38.3px;height:260px;background:#f3deb1;"></div>
<div class="t" style="transform:scaleX(1.0003);transform-origin:0 0;left:411.4px;top:182.5px;font-size:17.5px;color:#111;font-weight:bold;font-family:'Liberation Serif',serif;text-shadow:0 0 .5px rgba(0,0,0,.4);">Самореализация</div>
<div class="a" style="left:354.200px;top:224.2px;width:261px;font:13.600px/14px 'Liberation Serif',serif;color:#1c1c1c;text-align:justify;text-align-last:justify;white-space:nowrap;will-change:transform;text-shadow:0 0 .5px rgba(0,0,0,.45)">это стремление к совершенствованию, т. е.</div>
<div class="a" style="left:354.200px;top:240.3px;width:261px;font:13.600px/14px 'Liberation Serif',serif;color:#1c1c1c;text-align:justify;text-align-last:justify;white-space:nowrap;will-change:transform;text-shadow:0 0 .5px rgba(0,0,0,.45)">одна из высших потребностей личности,</div>
<div class="a" style="left:354.200px;top:256.5px;width:261px;font:13.600px/14px 'Liberation Serif',serif;color:#1c1c1c;text-align:justify;text-align-last:justify;white-space:nowrap;will-change:transform;text-shadow:0 0 .5px rgba(0,0,0,.45)">направленная не только на реализацию</div>
<div class="a" style="left:354.200px;top:272.6px;width:261px;font:13.600px/14px 'Liberation Serif',serif;color:#1c1c1c;text-align:justify;text-align-last:justify;white-space:nowrap;will-change:transform;text-shadow:0 0 .5px rgba(0,0,0,.45)">человеком своих сил и способностей, но и на</div>
<div class="a" style="left:354.200px;top:288.7px;width:261px;font:13.600px/14px 'Liberation Serif',serif;color:#1c1c1c;text-align:justify;text-align-last:justify;white-space:nowrap;will-change:transform;text-shadow:0 0 .5px rgba(0,0,0,.45)">постоянный рост своих возможностей,</div>
<div class="a" style="left:354.200px;top:304.8px;width:261px;font:13.600px/14px 'Liberation Serif',serif;color:#1c1c1c;text-align:justify;text-align-last:justify;white-space:nowrap;will-change:transform;text-shadow:0 0 .5px rgba(0,0,0,.45)">повышение качества своей деятельности, в</div>
<div class="a" style="left:354.200px;top:321.0px;width:261px;font:13.600px/14px 'Liberation Serif',serif;color:#1c1c1c;text-align:justify;text-align-last:justify;white-space:nowrap;will-change:transform;text-shadow:0 0 .5px rgba(0,0,0,.45)">основе которой лежат высшие</div>
<div class="t" style="transform:scaleX(0.9818);transform-origin:0 0;left:354.2px;top:337.11px;font-size:13.6px;color:#1c1c1c;font-family:'Liberation Serif',serif;line-height:14px;text-shadow:0 0 .5px rgba(0,0,0,.45);">общечеловеческие ценности.</div>
<div class="a" style="left:230.600px;top:137.500px;width:87.500px;height:23.500px;background:#f4f7fc;border:1.500px solid #2c4f94"></div>
<div class="a" style="left:231.5px;top:138.5px;width:85.7px;height:9.5px;background:linear-gradient(#4a6fb4,#2a4d92);"></div>
<div class="t" style="transform:scaleX(0.7753);transform-origin:0 0;left:233.3px;top:139.3px;font-size:8px;color:#fff;">Показ слайдов</div>
<div class="a" style="left:300px;top:141.5px;width:5px;height:3px;background:#fff;clip-path:polygon(0 0,100% 0,50% 100%)"></div>
<div class="t" style="left:309.5px;top:137.6px;font-size:9.5px;color:#fff;">×</div>
<div class="t" style="transform:scaleX(0.7911);transform-origin:0 0;left:233.6px;top:150px;font-size:8px;color:#1f2f5a;"><u>П</u>родолжить показ слайдов</div>
<div class="a" style="left:767.4px;top:146px;width:4.6px;height:279px;background:linear-gradient(#9db9e6 0%,#86a8dc 40%,#6f95cf 100%);border-left:.6px solid #6d8fc6"></div>
<div class="a" style="left:768px;top:270px;width:4px;height:36.5px;background:#e8edf6;"></div>
<div class="a" style="left:769px;top:394px;width:2px;height:2px;background:#2f4470;"></div>
<div class="a" style="left:769px;top:403px;width:2px;height:2px;background:#2f4470;"></div>
<div class="a" style="left:769px;top:411px;width:2px;height:2px;background:#2f4470;"></div>
<div class="a" style="left:160.8px;top:407.5px;width:0.9px;height:7px;background:#111;"></div>
<div class="a" style="left:162.6px;top:407.5px;width:0.9px;height:7px;background:#111;"></div>
<div class="a" style="left:158px;top:410.6px;width:2.8px;height:0.9px;background:#111;"></div>
<div class="a" style="left:163.5px;top:410.6px;width:2.8px;height:0.9px;background:#111;"></div>
<div class="a" style="left:163px;top:424.5px;width:609px;height:4px;background:#b5cff2;"></div>
<div class="a" style="left:163px;top:428.5px;width:605px;height:19.5px;background:#fff;"></div>
<div class="a" style="left:768px;top:428.5px;width:4px;height:19.5px;background:#c9d9ee;"></div>
<div class="t" style="transform:scaleX(0.9137);transform-origin:0 0;left:169px;top:431.5px;font-size:9.2px;color:#222;">Заметки к слайду</div>
<div class="a" style="left:47px;top:448.2px;width:725px;height:8px;background:linear-gradient(#cfdff5,#b3cdee);"></div>
<div class="t" style="transform:scaleX(0.6959);transform-origin:0 0;left:51.6px;top:450.5px;font-size:8.2px;color:#3a5a94;">Слайд 4 из 6</div>
<div class="a" style="left:90.5px;top:449px;width:0.8px;height:7px;background:#9ab4dc;"></div>
<div class="t" style="transform:scaleX(0.7423);transform-origin:0 0;left:95.8px;top:450.5px;font-size:8.2px;color:#3a5a94;">"Солнцестояние"</div>
<div class="a" style="left:149px;top:449px;width:0.8px;height:7px;background:#9ab4dc;"></div>
<div class="t" style="transform:scaleX(0.7080);transform-origin:0 0;left:154.2px;top:450.5px;font-size:8.2px;color:#3a5a94;">Русский (Россия)</div>
<div class="a" style="left:204px;top:449px;width:0.8px;height:7px;background:#9ab4dc;"></div>
<div class="a" style="left:637px;top:448.5px;width:32px;height:7.5px;background:#dfe9f7;border:.5px solid #9ab4dc;border-radius:1px"></div>
<div class="a" style="left:640px;top:450.5px;width:6px;height:5px;background:#5b6f8f;"></div>
<div class="a" style="left:650px;top:450.5px;width:6px;height:5px;background:#9aa9c0;"></div>
<div class="a" style="left:659.5px;top:450.5px;width:6px;height:5px;background:#8797b0;"></div>
<div class="t" style="transform:scaleX(0.7016);transform-origin:0 0;left:672px;top:450.5px;font-size:8.2px;color:#3a5a94;">68%</div>
<div class="a" style="left:689.500px;top:449.500px;width:7px;height:7px;border-radius:50%;border:1px solid #7d95bd;background:#e6eefa"></div>
<div class="a" style="left:691.5px;top:452.5px;width:3px;height:1px;background:#4a5f85;"></div>
<div class="a" style="left:698px;top:453.5px;width:56px;height:1px;background:#8fa6cb;"></div>
<div class="a" style="left:713.5px;top:450px;width:3.2px;height:6px;background:#e9f0fb;border:.6px solid #6f88b3"></div>
<div class="a" style="left:752px;top:449.500px;width:7px;height:7px;border-radius:50%;border:1px solid #7d95bd;background:#e6eefa"></div>
<div class="a" style="left:754px;top:452.5px;width:3px;height:1px;background:#4a5f85;"></div>
<div class="a" style="left:755px;top:451.5px;width:1px;height:3px;background:#4a5f85;"></div>
<div class="a" style="left:765px;top:450.5px;width:6px;height:5px;background:#4a5f85;opacity:.8"></div>
</div>
</div><!--/stage-->
<div id="chat" class="a">
<div class="t" style="transform:scaleX(0.8499);transform-origin:0 0;left:13.2px;top:26.0px;font-size:13.2px;color:#252423;font-weight:bold;">Чат собрания</div>
<svg style="left:176px;top:29px" width="8" height="8" viewBox="0 0 8 8" stroke="#3b3a39" stroke-width="1" fill="none"><path d="M.8 .8l6.400 6.400M7.200 .8L.8 7.200"/></svg>
<div class="a" style="left:29.5px;top:52.3px;width:145.8px;height:1.9px;background:#fff;border-radius:0 0 2px 2px"></div>
<div class="a" style="left:29.5px;top:61.4px;width:145.8px;height:33.0px;background:#fff;border-radius:2px;box-shadow:0 .5px 1px rgba(0,0,0,.08)"></div>
<div class="a" style="left:15.1px;top:66.8px;width:20px;height:20px;background:#f5ced4;border-radius:50%"></div>
<div class="t" style="transform:scaleX(0.8731);transform-origin:0 0;left:19.4px;top:72.7px;font-size:8.8px;color:#8a2f3f;">ПО</div>
<div class="a" style="left:28.3px;top:80.7px;width:8px;height:8px;background:#fff;border-radius:50%"></div>
<div class="a" style="left:29.3px;top:81.7px;width:6px;height:6px;background:#c4314b;border-radius:50%"></div>
<div class="t" style="transform:scaleX(0.8918);transform-origin:0 0;left:40.6px;top:67.6px;font-size:8.6px;color:#484644;">Панов Максим Олегович</div>
<div class="t" style="transform:scaleX(0.8459);transform-origin:0 0;left:134.7px;top:67.6px;font-size:8.6px;color:#8a8886;">20:19</div>
<div class="t" style="transform:scaleX(0.8282);transform-origin:0 0;left:40.6px;top:79.7px;font-size:10.4px;color:#333231;">нет</div>
<div class="a" style="left:40.6px;top:102.4px;width:147.2px;height:33.3px;background:#e2e2f6;border-radius:2px"></div>
<div class="t" style="transform:scaleX(0.8459);transform-origin:0 0;left:52.0px;top:109.1px;font-size:8.6px;color:#8a8886;">20:19</div>
<div class="t" style="transform:scaleX(0.8597);transform-origin:0 0;left:52.0px;top:120.1px;font-size:10.4px;color:#333231;">Я тоже не вижу презентацию</div>
<div class="a" style="left:29.5px;top:144.0px;width:145.8px;height:45.5px;background:#fff;border-radius:2px;box-shadow:0 .5px 1px rgba(0,0,0,.08)"></div>
<div class="a" style="left:15.1px;top:149.7px;width:20.400px;height:20.400px;border-radius:50%;overflow:hidden;background:#ae0560">
 <div class="a" style="left:7.200px;top:-.4px;width:6.200px;height:3px;border-radius:40% 40% 0 0;background:#15110f"></div>
 <div class="a" style="left:7.200px;top:.8px;width:6.100px;height:8px;border-radius:35% 35% 45% 45%;background:linear-gradient(90deg,#efe9dc 0%,#e6d9c4 55%,#b99f86 100%)"></div>
 <div class="a" style="left:1.500px;top:8.200px;width:17.500px;height:14px;border-radius:6px 6px 0 0;background:linear-gradient(90deg,#123f5c,#0f3550 50%,#0c2c45)"></div>
 <div class="a" style="left:8.400px;top:7.400px;width:4.200px;height:14px;background:#0a1a30"></div>
</div>
<div class="a" style="left:28.3px;top:162.9px;width:8px;height:8px;background:#fff;border-radius:50%"></div>
<div class="a" style="left:29.3px;top:163.9px;width:6px;height:6px;background:#c4314b;border-radius:50%"></div>
<div class="t" style="transform:scaleX(0.8667);transform-origin:0 0;left:40.6px;top:150.0px;font-size:8.6px;color:#484644;">Алтухов Андрей Сергеевич</div>
<div class="t" style="transform:scaleX(0.8459);transform-origin:0 0;left:141.7px;top:150.0px;font-size:8.6px;color:#8a8886;">20:20</div>
<div class="t" style="transform:scaleX(0.8466);transform-origin:0 0;left:40.6px;top:162.4px;font-size:10.4px;color:#333231;">скорее всего это связано с</div>
<div class="t" style="transform:scaleX(0.8488);transform-origin:0 0;left:40.6px;top:175.1px;font-size:10.4px;color:#333231;">интернетом.</div>
<div class="a" style="left:29.5px;top:197.6px;width:145.8px;height:33.39999999999998px;background:#fff;border-radius:2px;box-shadow:0 .5px 1px rgba(0,0,0,.08)"></div>
<div class="a" style="left:15.1px;top:204.0px;width:20.400px;height:20.400px;border-radius:50%;overflow:hidden;background:#ae0560">
 <div class="a" style="left:7.200px;top:-.4px;width:6.200px;height:3px;border-radius:40% 40% 0 0;background:#15110f"></div>
 <div class="a" style="left:7.200px;top:.8px;width:6.100px;height:8px;border-radius:35% 35% 45% 45%;background:linear-gradient(90deg,#efe9dc 0%,#e6d9c4 55%,#b99f86 100%)"></div>
 <div class="a" style="left:1.500px;top:8.200px;width:17.500px;height:14px;border-radius:6px 6px 0 0;background:linear-gradient(90deg,#123f5c,#0f3550 50%,#0c2c45)"></div>
 <div class="a" style="left:8.400px;top:7.400px;width:4.200px;height:14px;background:#0a1a30"></div>
</div>
<div class="a" style="left:28.3px;top:216.9px;width:8px;height:8px;background:#fff;border-radius:50%"></div>
<div class="a" style="left:29.3px;top:217.9px;width:6px;height:6px;background:#c4314b;border-radius:50%"></div>
<div class="t" style="transform:scaleX(0.8667);transform-origin:0 0;left:40.6px;top:204.0px;font-size:8.6px;color:#484644;">Алтухов Андрей Сергеевич</div>
<div class="t" style="transform:scaleX(0.8459);transform-origin:0 0;left:141.7px;top:204.0px;font-size:8.6px;color:#8a8886;">20:20</div>
<div class="t" style="transform:scaleX(0.8540);transform-origin:0 0;left:40.6px;top:216.1px;font-size:10.4px;color:#333231;">плохо работает интернет.</div>
<div class="a" style="left:29.5px;top:239.0px;width:145.8px;height:45.80000000000001px;background:#fff;border-radius:2px;box-shadow:0 .5px 1px rgba(0,0,0,.08)"></div>
<div class="a" style="left:15.1px;top:245.0px;width:20px;height:20px;background:#e4eedb;border-radius:50%"></div>
<div class="t" style="transform:scaleX(0.9723);transform-origin:0 0;left:19.4px;top:250.9px;font-size:8.8px;color:#4d6b2f;">ДР</div>
<div class="a" style="left:28.3px;top:258.5px;width:8px;height:8px;background:#fff;border-radius:50%"></div>
<div class="a" style="left:29.3px;top:259.5px;width:6px;height:6px;background:#c4314b;border-radius:50%"></div>
<div class="t" style="transform:scaleX(0.8612);transform-origin:0 0;left:40.6px;top:245.4px;font-size:8.6px;color:#484644;">Данелян Владимир Рамизо...</div>
<div class="t" style="transform:scaleX(0.8459);transform-origin:0 0;left:147.6px;top:245.4px;font-size:8.6px;color:#8a8886;">20:20</div>
<div class="t" style="transform:scaleX(0.8504);transform-origin:0 0;left:40.6px;top:257.6px;font-size:10.4px;color:#333231;">презентация тоже не</div>
<div class="t" style="transform:scaleX(0.8121);transform-origin:0 0;left:40.6px;top:270.1px;font-size:10.4px;color:#333231;">листается</div>
<div class="a" style="left:29.5px;top:292.4px;width:145.8px;height:58.60000000000002px;background:#fff;border-radius:2px;box-shadow:0 .5px 1px rgba(0,0,0,.08)"></div>
<div class="a" style="left:15.1px;top:299.2px;width:20.400px;height:20.400px;border-radius:50%;overflow:hidden;background:#ae0560">
 <div class="a" style="left:7.200px;top:-.4px;width:6.200px;height:3px;border-radius:40% 40% 0 0;background:#15110f"></div>
 <div class="a" style="left:7.200px;top:.8px;width:6.100px;height:8px;border-radius:35% 35% 45% 45%;background:linear-gradient(90deg,#efe9dc 0%,#e6d9c4 55%,#b99f86 100%)"></div>
 <div class="a" style="left:1.500px;top:8.200px;width:17.500px;height:14px;border-radius:6px 6px 0 0;background:linear-gradient(90deg,#123f5c,#0f3550 50%,#0c2c45)"></div>
 <div class="a" style="left:8.400px;top:7.400px;width:4.200px;height:14px;background:#0a1a30"></div>
</div>
<div class="a" style="left:28.3px;top:311.9px;width:8px;height:8px;background:#fff;border-radius:50%"></div>
<div class="a" style="left:29.3px;top:312.9px;width:6px;height:6px;background:#c4314b;border-radius:50%"></div>
<div class="t" style="transform:scaleX(0.8667);transform-origin:0 0;left:40.6px;top:299.2px;font-size:8.6px;color:#484644;">Алтухов Андрей Сергеевич</div>
<div class="t" style="transform:scaleX(0.8459);transform-origin:0 0;left:141.7px;top:299.2px;font-size:8.6px;color:#8a8886;">20:23</div>
<div class="t" style="transform:scaleX(0.8555);transform-origin:0 0;left:40.6px;top:311.1px;font-size:10.4px;color:#333231;">чтобы хорошо работала</div>
<div class="t" style="transform:scaleX(0.8543);transform-origin:0 0;left:40.6px;top:323.7px;font-size:10.4px;color:#333231;">презентация, рекомендую</div>
<div class="t" style="transform:scaleX(0.8176);transform-origin:0 0;left:40.6px;top:336.4px;font-size:10.4px;color:#333231;">загружать все в файлы.</div>
<div class="a" style="left:42.0px;top:362.0px;width:148.7px;height:45.7px;background:#fff;border-radius:2px;box-shadow:0 .5px 1px rgba(0,0,0,.08)"></div>
<div class="t" style="transform:scaleX(0.8202);transform-origin:0 0;left:49.3px;top:372.6px;font-size:10.4px;color:#333231;font-weight:bold;">Собрание</div>
<div class="t" style="transform:scaleX(0.8748);transform-origin:0 0;left:49.3px;top:384.4px;font-size:8.4px;color:#605e5c;">Запись остановлена. Сохраняем ее в...</div>
<div class="a" style="left:173.2px;top:370.8px;width:1.8px;height:1.8px;background:#3b3a39;border-radius:50%"></div>
<div class="a" style="left:176.7px;top:370.8px;width:1.8px;height:1.8px;background:#3b3a39;border-radius:50%"></div>
<div class="a" style="left:180.2px;top:370.8px;width:1.8px;height:1.8px;background:#3b3a39;border-radius:50%"></div>
<div class="a" style="left:15.3px;top:415.7px;width:172.7px;height:25.3px;background:#fff;border-radius:2px"></div>
<div class="t" style="transform:scaleX(0.8168);transform-origin:0 0;left:25.0px;top:424.9px;font-size:10.6px;color:#484644;">Ответить</div>
<svg style="left:16.0px;top:446.0px" width="11" height="11" viewBox="0 0 11 11" fill="none" stroke="#575553" stroke-width=".95"><path d="M.8 9.500L3.800 1.500h.8l3 8M1.800 7h4.800"/><path d="M6.500 10.300c1.500 0 2.200-1.500 3.800-5" stroke-width=".9"/></svg>
<svg style="left:37.0px;top:446.0px" width="10" height="11" viewBox="0 0 10 11" fill="none" stroke="#575553" stroke-width=".95"><path d="M8.600 4.600L4.300 9a1.750 1.750 0 0 1-2.500-2.500L6.300 1.900a1.150 1.150 0 0 1 1.650 1.650L3.900 7.700" stroke-width=".9"/></svg>
<svg style="left:56.5px;top:446.0px" width="11" height="11" viewBox="0 0 11 11" fill="none" stroke="#575553" stroke-width=".95"><circle cx="5.500" cy="5.500" r="4.800"/><path d="M3.300 6.600a2.500 2.500 0 0 0 4.400 0"/><circle cx="3.900" cy="4.200" r=".6" fill="#575553" stroke="none"/><circle cx="7.100" cy="4.200" r=".6" fill="#575553" stroke="none"/></svg>
<svg style="left:77.0px;top:446.5px" width="11.5" height="10" viewBox="0 0 11.5 10" fill="none" stroke="#575553" stroke-width=".95"><rect x=".6" y=".6" width="10.300" height="8.800" rx="1.400"/></svg>
<div class="t" style="transform:scaleX(0.9404);transform-origin:0 0;left:79.2px;top:449.6px;font-size:4.6px;color:#575553;font-weight:bold;">GIF</div>
<svg style="left:98.0px;top:446.0px" width="11" height="11" viewBox="0 0 11 11" fill="none" stroke="#575553" stroke-width=".95"><path d="M1.800 .8h7.400a1 1 0 0 1 1 1v4.600l-3.800 3.800H1.800a1 1 0 0 1-1-1V1.800a1 1 0 0 1 1-1z"/><path d="M10.200 6.400H7.400a1 1 0 0 0-1 1v2.800"/><path d="M3.400 5.600a2 2 0 0 0 3.400 0"/><circle cx="3.700" cy="3.600" r=".55" fill="#575553" stroke="none"/><circle cx="6.800" cy="3.600" r=".55" fill="#575553" stroke="none"/></svg>
<svg style="left:117.5px;top:446.0px" width="11" height="11" viewBox="0 0 11 11" fill="none" stroke="#8b8cc7" stroke-width="1"><path d="M.8 1l9.400 4.500L.8 10l1.800-4.500z"/><path d="M2.600 5.500h4"/></svg>
<div class="a" style="left:139.3px;top:450.8px;width:1.9px;height:1.9px;background:#575553;border-radius:50%"></div>
<div class="a" style="left:143.0px;top:450.8px;width:1.9px;height:1.9px;background:#575553;border-radius:50%"></div>
<div class="a" style="left:146.7px;top:450.8px;width:1.9px;height:1.9px;background:#575553;border-radius:50%"></div>
<svg style="left:176.0px;top:446.0px" width="11" height="11" viewBox="0 0 11 11" fill="none" stroke="#575553" stroke-width=".95"><path d="M.8 1l9.400 4.500L.8 10l1.600-4.500z"/><path d="M2.400 5.500h4.600"/></svg>
</div><!--/chat-->
<div id="strip" class="a">
<div class="a" style="left:272px;top:0;width:115px;height:59px;background:#3c3c3c"></div>
<div class="a" style="left:387px;top:0;width:114px;height:59px;background:#3a3a3a"></div>
<div class="a" style="left:501px;top:0;width:114px;height:59px;background:radial-gradient(ellipse 52px 33px at 57px 30px,#5a5986 0%,#4a4969 40%,#3f3e57 72%,#3a394f 100%)"></div>
<div class="a" style="left:615px;top:0;width:114px;height:59px;background:radial-gradient(ellipse 52px 33px at 57px 30px,#5a5986 0%,#4a4969 40%,#3f3e57 72%,#3a394f 100%)"></div>
<div class="a" style="left:19.6px;top:15.900px;width:28.200px;height:28.200px;border-radius:50%;background:#6264a7"></div><div class="t" style="transform:scaleX(0.9678);transform-origin:0 0;left:28.4px;top:24.9px;font-size:9.6px;font-weight:bold;color:#fff">+9</div>
<div class="a" style="left:72.6px;top:15.900px;width:28.200px;height:28.200px;border-radius:50%;background:#e9c6cb"></div><div class="t" style="transform:scaleX(0.8711);transform-origin:0 0;left:79.2px;top:23.7px;font-size:12px;font-weight:bold;color:#7b2633">ДВ</div>
<div class="a" style="left:125.5px;top:15.900px;width:28.200px;height:28.200px;border-radius:50%;background:#f5ced4"></div><div class="t" style="transform:scaleX(0.8904);transform-origin:0 0;left:131.6px;top:23.7px;font-size:12px;font-weight:bold;color:#8a2f3f">ПО</div>
<div class="a" style="left:178.7px;top:15.900px;width:28.200px;height:28.200px;border-radius:50%;background:#d4e4ea"></div><div class="t" style="transform:scaleX(0.8756);transform-origin:0 0;left:185.1px;top:23.7px;font-size:12px;font-weight:bold;color:#244a5a">ОА</div>
<div class="a" style="left:232.3px;top:15.900px;width:28.200px;height:28.200px;border-radius:50%;background:#f6cfc6"></div><div class="t" style="transform:scaleX(0.9128);transform-origin:0 0;left:237.9px;top:23.7px;font-size:12px;font-weight:bold;color:#7a2418">МИ</div>
<div class="a" style="left:316px;top:15.400px;width:28px;height:28px;border-radius:50%;overflow:hidden;background:#ae0560">
 <div class="a" style="left:9.800px;top:-.5px;width:8.600px;height:4px;border-radius:40% 40% 0 0;background:#15110f"></div>
 <div class="a" style="left:9.800px;top:1px;width:8.400px;height:11px;border-radius:35% 35% 45% 45%;background:linear-gradient(90deg,#efe9dc 0%,#e6d9c4 55%,#b99f86 100%)"></div>
 <div class="a" style="left:17.800px;top:4px;width:1.600px;height:3px;border-radius:50%;background:#d9c3ad"></div>
 <div class="a" style="left:2px;top:11.300px;width:24px;height:18px;border-radius:8px 8px 0 0;background:linear-gradient(90deg,#123f5c,#0f3550 50%,#0c2c45)"></div>
 <div class="a" style="left:11.500px;top:10.200px;width:5.800px;height:19px;background:#0a1a30"></div>
</div>
<div class="a" style="left:430.0px;top:15.900px;width:28.200px;height:28.200px;border-radius:50%;background:#efdcd5"></div><div class="t" style="transform:scaleX(0.8727);transform-origin:0 0;left:437.4px;top:23.7px;font-size:12px;font-weight:bold;color:#5f3b2e">ГВ</div>
<div class="a" style="left:540.600px;top:12.400px;width:34.700px;height:34.700px;border-radius:50%;background:#9091ee;box-shadow:0 0 5px 1px rgba(140,140,230,.45)"></div>
<div class="a" style="left:543px;top:14.800px;width:30px;height:30px;border-radius:50%;background:#23223a"></div>
<div class="a" style="left:543.700px;top:15px;width:28.600px;height:28.600px;border-radius:50%;background:#c6d4e7"></div>
<div class="t" style="transform:scaleX(0.9069);transform-origin:0 0;left:551px;top:23.700px;font-size:12px;font-weight:bold;color:#1e2b5a">ГИ</div>
<div class="a" style="left:654.600px;top:12.400px;width:34.700px;height:34.700px;border-radius:50%;background:#9091ee;box-shadow:0 0 5px 1px rgba(140,140,230,.45)"></div>
<div class="a" style="left:657px;top:14.800px;width:29.900px;height:29.900px;border-radius:50%;background:#26253a"></div>
<div class="a" style="left:657.800px;top:15.500px;width:28.300px;height:28.300px;border-radius:50%;overflow:hidden;background:linear-gradient(#dde3e9 0%,#e8ebee 45%,#e3e6ea 57%,#107c88 60%,#0d6f7b 100%)">
 <div class="a" style="left:0;top:0;width:28px;height:16px;background:repeating-linear-gradient(90deg,rgba(190,205,220,.5) 0,rgba(240,243,246,.4) 2.500px,rgba(200,212,225,.5) 5px)"></div>
 <div class="a" style="left:10.800px;top:3.600px;width:6.800px;height:8.500px;border-radius:45% 45% 30% 30%;background:#3f271c"></div>
 <div class="a" style="left:11.600px;top:5px;width:3.800px;height:5px;border-radius:45%;background:#dcb8a4"></div>
 <div class="a" style="left:7.500px;top:10.400px;width:10.500px;height:11.500px;border-radius:3.500px;background:#f3dfe3"></div>
 <div class="a" style="left:1.500px;top:14.800px;width:7px;height:3px;border-radius:2px;background:#e8cfcf"></div>
 <div class="a" style="left:7.500px;top:21px;width:10.500px;height:8px;background:#17171d"></div>
</div>
</div>
</div>
<div id="taskbar" class="a">
<svg style="left:10.200px;top:8.1px" width="11" height="11" viewBox="0 0 11 11" fill="#fff"><path d="M0 1.500L4.600 .9v4.200H0zM5.300 .8L11 0v5.100H5.300zM0 5.800h4.600V10L0 9.400zM5.300 5.800H11V11l-5.700-.8z"/></svg>
<div class="a" style="left:30.8px;top:0.0px;width:218px;height:25.3px;background:#f3f3f3;"></div>
<svg style="left:39.5px;top:8.3px" width="11" height="11" viewBox="0 0 11 11" fill="none" stroke="#2b2b2b" stroke-width="1.1"><circle cx="6.600" cy="4.300" r="3.500"/><path d="M4.200 6.900L.8 10.300"/></svg>
<div class="t" style="transform:scaleX(0.8238);transform-origin:0 0;left:56.2px;top:8.3px;font-size:11.2px;color:#3c3c3c;">Введите здесь текст для поиска</div>
<svg style="left:258.0px;top:7.8px" width="12" height="11" viewBox="0 0 12 11" fill="none" stroke="#e8e8e8" stroke-width="1"><rect x="2.500" y="2.500" width="6" height="6"/><path d="M.5 1v9M2.500 .5h6M2.500 10.500h6"/><path d="M10.800 3v1.500M10.800 6.500v2" /></svg>
<svg style="left:290px;top:6.8px" width="14" height="14" viewBox="0 0 14 14"><path d="M.6 6.200C1 2.800 3.600.6 7 .6c3.800 0 6.400 2.600 6.400 6.400v1.400H4.600c.2 1.800 1.600 2.800 3.600 2.800 1.600 0 3-.4 4.400-1.200v2.600c-1.400.7-3 1-4.800 1C3.800 13.600 1 11.200 1 7.600c0-1.800.8-3.200 2.200-4.200-.8.800-1.200 1.800-1.300 2.600h7.500c0-1.700-1-2.700-2.600-2.700-2.400 0-4.600 1.200-6.200 2.900z" fill="#2a8be3"/></svg>
<div class="a" style="left:320.5px;top:8.3px;width:15px;height:10px;background:#f5c644;border-radius:1px"></div>
<div class="a" style="left:320.5px;top:7.1px;width:6.5px;height:2.5px;background:#e0a92e;border-radius:1px 1px 0 0"></div>
<div class="a" style="left:322.5px;top:12.8px;width:11px;height:5.5px;background:#3f8fe0;"></div>
<div class="a" style="left:325.5px;top:15.3px;width:5px;height:3px;background:#f5e7b0;"></div>
<svg style="left:351px;top:6.1px" width="15" height="15" viewBox="0 0 15 15"><path d="M5 4.500V3a2.500 2.500 0 0 1 5 0v1.500" fill="none" stroke="#f0f0f0" stroke-width="1"/><path d="M1 4.500h13v9.500H1z" fill="#f4f4f4"/><rect x="4.600" y="6.800" width="2.500" height="2.500" fill="#f25022"/><rect x="7.900" y="6.800" width="2.500" height="2.500" fill="#7fba00"/><rect x="4.600" y="10" width="2.500" height="2.500" fill="#00a4ef"/><rect x="7.900" y="10" width="2.500" height="2.500" fill="#ffb900"/></svg>
<div class="a" style="left:382.8px;top:5.7px;width:15.4px;height:15.3px;background:#f7f5f5;border-radius:1px"></div>
<div class="a" style="left:384.8px;top:11.3px;width:11.4px;height:2.2px;background:#a50e17;"></div>
<div class="a" style="left:385.8px;top:14.3px;width:9.4px;height:5.8px;background:#a50e17;"></div>
<div class="a" style="left:389.9px;top:11.1px;width:1.3px;height:9.2px;background:#f7f5f5;"></div>
<div class="a" style="left:386.3px;top:7.1px;width:3.8px;height:3.6px;background:transparent;border:1.200px solid #a50e17;border-radius:50% 50% 0 50%"></div>
<div class="a" style="left:391.0px;top:7.1px;width:3.8px;height:3.6px;background:transparent;border:1.200px solid #a50e17;border-radius:50% 50% 50% 0"></div>
<div class="a" style="left:407.2px;top:0.0px;width:31px;height:25.3px;background:#5e5e5e;"></div>
<div class="a" style="left:414.5px;top:8.8px;width:10px;height:9.5px;background:#4b53bc;border-radius:1.500px"></div>
<div class="t" style="left:417.3px;top:10.3px;font-size:7px;color:#fff;font-weight:bold;">T</div>
<div class="a" style="left:424.5px;top:7.1px;width:3.4px;height:3.4px;background:#7b83eb;border-radius:50%"></div>
<div class="a" style="left:420.5px;top:6.1px;width:4px;height:4px;background:#5b62cf;border-radius:50%"></div>
<div class="a" style="left:423.5px;top:10.8px;width:6px;height:6.5px;background:#7b83eb;border-radius:1px 1px 3px 3px"></div>
<div class="a" style="left:422.3px;top:13.1px;width:8.4px;height:8.4px;background:#d3222f;border-radius:50%"></div>
<div class="t" style="left:424.8px;top:14.2px;font-size:6.8px;color:#fff;font-weight:bold;">1</div>
<div class="a" style="left:450.0px;top:6.8px;width:11.5px;height:13px;background:linear-gradient(#41a5ee 0%,#2b7cd3 40%,#185abd 75%,#103f91 100%);border-radius:1px"></div>
<div class="a" style="left:445.5px;top:9.3px;width:8.5px;height:8.5px;background:#185abd;border-radius:1px"></div>
<div class="t" style="left:446.8px;top:10.5px;font-size:6.4px;color:#fff;font-weight:bold;">W</div>
<div class="a" style="left:283.0px;top:24.1px;width:27px;height:1.2px;background:#78c688;"></div>
<div class="a" style="left:315.5px;top:24.1px;width:25.5px;height:1.2px;background:#78c688;"></div>
<div class="a" style="left:407.2px;top:24.1px;width:31.0px;height:1.2px;background:#78c688;"></div>
<div class="a" style="left:440.5px;top:24.1px;width:25.5px;height:1.2px;background:#78c688;"></div>
<svg style="left:816.5px;top:10.8px" width="9" height="5" viewBox="0 0 9 5" fill="none" stroke="#f0f0f0" stroke-width="1.1"><path d="M.5 4.500l4-3.800 4 3.800"/></svg>
<svg style="left:830.5px;top:10.3px" width="11.5" height="7" viewBox="0 0 11.5 7" fill="none" stroke="#f0f0f0" stroke-width="0.9"><rect x="1.800" y="1.200" width="8.800" height="4.800" /><rect x="2.800" y="2.200" width="4.500" height="2.800" fill="#f0f0f0" stroke="none"/><path d="M.6 .4v2"/></svg>
<svg style="left:847.0px;top:9.1px" width="9.5" height="9" viewBox="0 0 9.5 9" fill="none" stroke="#f0f0f0" stroke-width="0.9"><path d="M1 8.500A7.500 7.500 0 0 1 8.500 1" opacity=".55"/><path d="M3.300 8.500a5.200 5.200 0 0 1 5.200-5.200" opacity=".8"/><path d="M5.700 8.500a2.800 2.800 0 0 1 2.800-2.800"/><circle cx="8.200" cy="8.200" r=".8" fill="#f0f0f0" stroke="none"/></svg>
<svg style="left:860.5px;top:8.8px" width="12" height="9.5" viewBox="0 0 12 9.5" fill="none" stroke="#f0f0f0" stroke-width="0.9"><path d="M.6 3.400h2L5 1.200v7.200L2.600 6.200h-2z"/><path d="M6.600 3.200a2.200 2.200 0 0 1 0 3.200M8.200 2a4 4 0 0 1 0 5.600M9.800 .8a5.800 5.800 0 0 1 0 8" /></svg>
<div class="t" style="transform:scaleX(0.7171);transform-origin:0 0;left:878.8px;top:8.8px;font-size:9.2px;color:#f2f2f2;">РУС</div>
<div class="t" style="transform:scaleX(0.7522);transform-origin:0 0;left:909.7px;top:3.0px;font-size:9.2px;color:#f2f2f2;">20:23</div>
<div class="t" style="transform:scaleX(0.7590);transform-origin:0 0;left:901.4px;top:14.1px;font-size:9.2px;color:#f2f2f2;">10.04.2020</div>
<svg style="left:948.0px;top:8.3px" width="10.5" height="9.5" viewBox="0 0 10.5 9.5" fill="none" stroke="#f2f2f2" stroke-width="0.8"><path d="M.5 .5h9v6.500h-5l-2.500 2v-2h-1.500z" fill="#f2f2f2"/><path d="M2 2.500h6M2 4.500h6" stroke="#2a2a2a" stroke-width=".7"/></svg>
<div class="a" style="left:953.5px;top:14.3px;width:8px;height:8px;background:#1f1f1f;border-radius:50%;border:.8px solid #e8e8e8"></div>
<div class="t" style="left:956.0px;top:15.6px;font-size:6.2px;color:#fff;">2</div>
</div><!--/taskbar-->
</body>
</html>
